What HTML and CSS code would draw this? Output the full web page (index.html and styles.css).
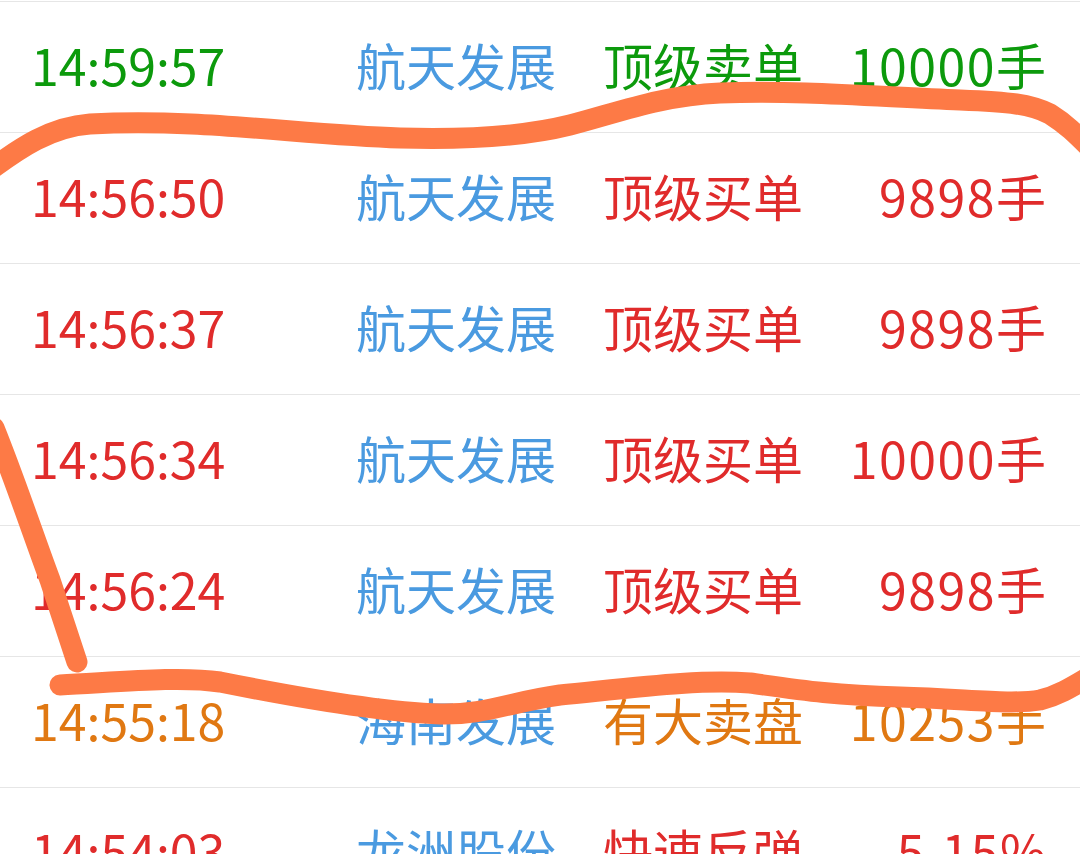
FILE: index.html
```html
<!DOCTYPE html>
<html lang="zh-CN">
<head>
<meta charset="utf-8">
<title>异动</title>
<link rel="stylesheet" href="styles.css">
</head>
<body>
<div class="list">
  <div class="row green"><span class="time">14:59:57</span><span class="name">航天发展</span><span class="type">顶级卖单</span><span class="amt">10000手</span></div>
  <div class="row red"><span class="time">14:56:50</span><span class="name">航天发展</span><span class="type">顶级买单</span><span class="amt">9898手</span></div>
  <div class="row red"><span class="time">14:56:37</span><span class="name">航天发展</span><span class="type">顶级买单</span><span class="amt">9898手</span></div>
  <div class="row red"><span class="time">14:56:34</span><span class="name">航天发展</span><span class="type">顶级买单</span><span class="amt">10000手</span></div>
  <div class="row red"><span class="time">14:56:24</span><span class="name">航天发展</span><span class="type">顶级买单</span><span class="amt">9898手</span></div>
  <div class="row orange"><span class="time">14:55:18</span><span class="name">海南发展</span><span class="type">有大卖盘</span><span class="amt">10253手</span></div>
  <div class="row red"><span class="time">14:54:03</span><span class="name">龙洲股份</span><span class="type">快速反弹</span><span class="amt">-5.15%</span></div>
</div>
<svg class="scribble" width="1080" height="854" viewBox="0 0 1080 854">
  <path d="M -10,170 C 20,148 50,127 90,124 C 200,118 300,135 400,138 C 470,140 530,135 570,125 C 620,112 660,96 720,93 C 800,90 880,97 960,100 C 1010,102 1030,104 1050,114 C 1066,124 1076,134 1092,150" />
  <path d="M -6,428 C 15,480 35,540 50,580 C 60,610 70,640 77,662" />
  <path d="M 60,685 C 120,682 180,676 220,682 C 300,698 380,712 440,714 C 485,715 510,702 560,695 C 640,687 700,679 750,683 C 800,690 830,695 900,697 C 970,699 1010,705 1040,700 C 1060,695 1075,685 1092,675" />
</svg>
</body>
</html>
```

FILE: styles.css
```css
html, body {
  margin: 0;
  padding: 0;
  background: #ffffff;
}

body {
  width: 1080px;
  height: 854px;
  overflow: hidden;
  position: relative;
  font-family: "Noto Sans CJK SC", "Noto Sans", sans-serif;
}

.list {
  padding-top: 1px;
}

.row {
  box-sizing: border-box;
  display: grid;
  grid-template-columns: 325px 247px 1fr auto;
  align-items: center;
  height: 131px;
  border-top: 1px solid #e6e6e6;
  padding: 0 34px 6px 31px;
  font-size: 50px;
  line-height: 1;
}

.name {
  color: #4a9ae0;
}

.amt {
  text-align: right;
  letter-spacing: 1.5px;
  margin-right: -1.5px;
}

.green { color: #0c9a0c; }
.red { color: #e02b2b; }
.orange { color: #e07812; }

.scribble {
  position: absolute;
  left: 0;
  top: 0;
  pointer-events: none;
}

.scribble path {
  fill: none;
  stroke: #fd7a46;
  stroke-width: 21;
  stroke-linecap: round;
  stroke-linejoin: round;
}
```
